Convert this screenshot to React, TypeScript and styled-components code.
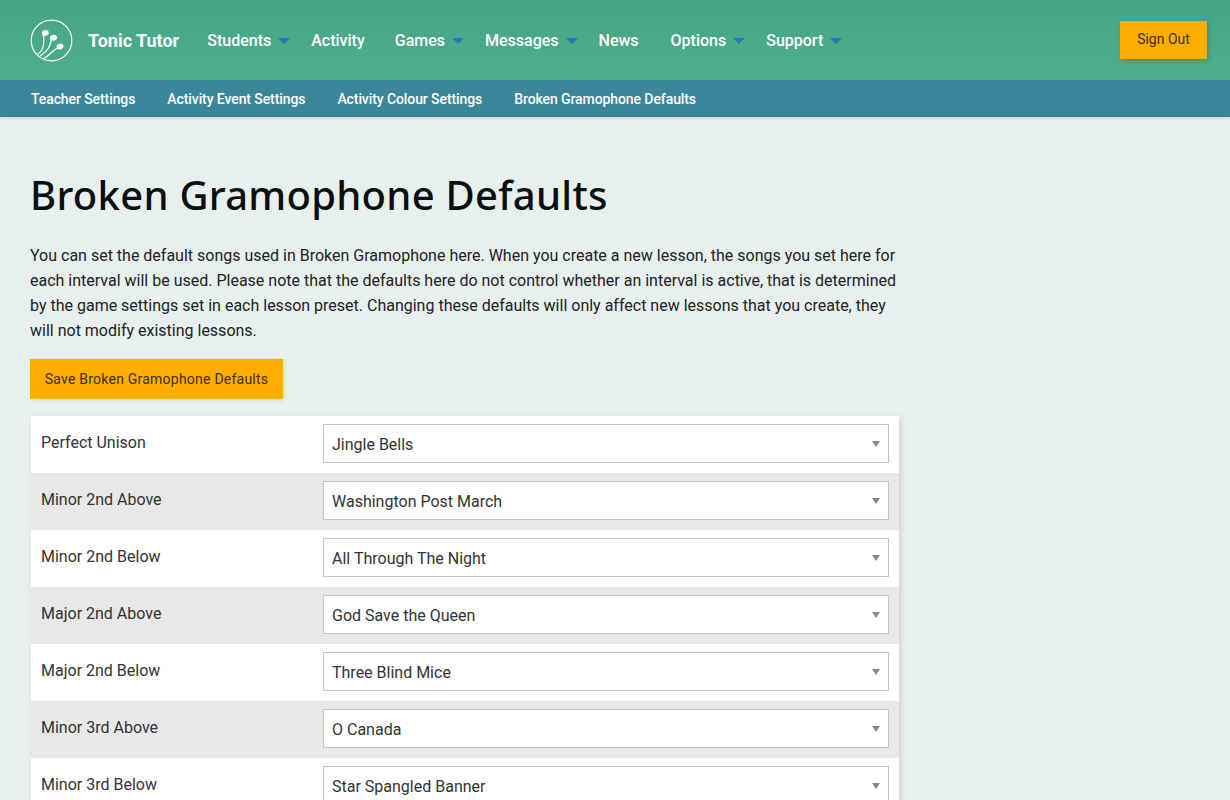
import React from 'react';
import styled, { createGlobalStyle } from 'styled-components';

const Global = createGlobalStyle`
  html, body { margin: 0; padding: 0; height: 800px; overflow: hidden; }
  body { background: #e8f0ef; font-family: Roboto, "Liberation Sans", sans-serif; color: #222; }
  * { box-sizing: border-box; }
`;
const TopBar = styled.header`
  height: 80px; display: flex; align-items: center; padding: 0 23px 0 30px;
  background: linear-gradient(180deg, #44a584 0%, #4fad8d 100%);
`;
const Brand = styled.a`
  display: flex; align-items: center; gap: 15px; color: #fff; font-weight: 700; font-size: 18px; margin-right: 28px;
`;
const Nav = styled.nav`display: flex; align-items: center; flex: 1;`;
const NavItem = styled.a<{ $after: number }>`
  display: flex; align-items: center; color: #fff; font-size: 16px; font-weight: 500; height: 80px;
  margin-right: ${p => p.$after}px;
`;
const Caret = styled.span`
  width: 0; height: 0; margin-left: 7px; margin-top: 2px;
  border-left: 6px solid transparent; border-right: 6px solid transparent; border-top: 6px solid #2478c4;
`;
const SignOut = styled.button`
  width: 87px; height: 38px; border: 0; background: #ffae00; color: #3a3000;
  font: 400 14px Roboto, sans-serif; box-shadow: 2px 2px 5px rgba(0,0,0,.15); padding: 0 0 2px;
`;
const SubBar = styled.div`
  height: 37px; background: #3c8699; display: flex; align-items: center; gap: 32px; padding-left: 31px;
  box-shadow: 0 1px 3px rgba(0,0,0,.15);
`;
const SubLink = styled.a`color: #fff; font-size: 14px; font-weight: 500; letter-spacing: -0.09px;`;
const Main = styled.main`width: 870px; margin-left: 30px; padding-top: 51px;`;
const Title = styled.h1`
  margin: 0 0 21px; font: 500 40px/54px "Noto Sans", "Open Sans", sans-serif; color: #0b0f10; letter-spacing: 0.27px;
`;
const Intro = styled.p`
  margin: 0 0 16px; font-size: 16px; line-height: 25px; color: #222;
`;
const SaveButton = styled.button`
  height: 40px; width: 253px; padding: 0; border: 0; background: #ffae00; color: #3a3000; display: block;
  font: 400 14px Roboto, sans-serif; letter-spacing: 0.23px; box-shadow: 1px 1px 4px rgba(0,0,0,.1);
`;
const Table = styled.div`
  margin: 17px 0 0 1px; width: 868px; box-shadow: 2px 2px 6px rgba(0,0,0,.12);
`;
const Row = styled.div<{ $alt: boolean }>`
  height: 57px; display: flex; background: ${p => (p.$alt ? '#e8e8e8' : '#fff')};
  padding: 8px 10px 0;
`;
const Label = styled.div`
  width: 282px; font-size: 16px; line-height: 20px; padding-top: 9px; color: #333;
`;
const SelectBox = styled.div`position: relative; width: 566px; height: 39px;`;
const Select = styled.select`
  appearance: none; width: 100%; height: 100%; background: #fff; border: 1px solid #c4c4c4; border-radius: 0;
  padding: 2px 8px 0; font: 400 16px Roboto, sans-serif; color: #333; outline: none;
`;
const SelectCaret = styled.span`
  position: absolute; right: 9px; top: 17px; width: 0; height: 0;
  border-left: 4px solid transparent; border-right: 4px solid transparent; border-top: 6px solid #888;
`;

const Logo = () => (
  <svg width="43" height="43" viewBox="0 0 43 43" fill="none" stroke="#fff" strokeWidth="1.2">
    <circle cx="21.5" cy="21.500" r="20.300" />
    <path d="M14 15c-1 3 .5 7-.5 11-.5 3-2.500 7-5.500 9" />
    <path d="M21.500 20c-1 3-1 6-3 9-2 3.500-5.500 6-8.500 8" />
    <path d="M28 29c-2 .5-4 2-6.500 4.500-2 2-5 4.500-7.500 6" />
    <ellipse cx="15.300" cy="14" rx="3.500" ry="2.800" fill="#fff" stroke="none" transform="rotate(-15 15.300 14)" />
    <ellipse cx="23.500" cy="18.800" rx="3.500" ry="2.800" fill="#fff" stroke="none" transform="rotate(-15 23.500 18.800)" />
    <ellipse cx="30" cy="27.500" rx="3.500" ry="2.800" fill="#fff" stroke="none" transform="rotate(-20 30 27.500)" />
  </svg>
);

const nav: [string, boolean, number][] = [['Students', true, 21], ['Activity', false, 30], ['Games', true, 21], ['Messages', true, 21], ['News', false, 32], ['Options', true, 21], ['Support', true, 21]];
const subs = ['Teacher Settings', 'Activity Event Settings', 'Activity Colour Settings', 'Broken Gramophone Defaults'];
const rows = [
  ['Perfect Unison', 'Jingle Bells'],
  ['Minor 2nd Above', 'Washington Post March'],
  ['Minor 2nd Below', 'All Through The Night'],
  ['Major 2nd Above', 'God Save the Queen'],
  ['Major 2nd Below', 'Three Blind Mice'],
  ['Minor 3rd Above', 'O Canada'],
  ['Minor 3rd Below', 'Star Spangled Banner'],
];

export default function App() {
  return (
    <>
      <Global />
      <TopBar>
        <Brand><Logo />Tonic Tutor</Brand>
        <Nav>
          {nav.map(([n, d, a]) => (
            <NavItem key={n} $after={a}>{n}{d && <Caret />}</NavItem>
          ))}
        </Nav>
        <SignOut>Sign Out</SignOut>
      </TopBar>
      <SubBar>{subs.map(s => <SubLink key={s}>{s}</SubLink>)}</SubBar>
      <Main>
        <Title>Broken Gramophone Defaults</Title>
        <Intro>You can set the default songs used in Broken Gramophone here. When you create a new lesson, the songs you set here for each interval will be used. Please note that the defaults here do not control whether an interval is active, that is determined by the game settings set in each lesson preset. Changing these defaults will only affect new lessons that you create, they will not modify existing lessons.</Intro>
        <SaveButton>Save Broken Gramophone Defaults</SaveButton>
        <Table>
          {rows.map(([l, v], i) => (
            <Row key={l} $alt={i % 2 === 1}>
              <Label>{l}</Label>
              <SelectBox>
                <Select defaultValue={v}><option>{v}</option></Select>
                <SelectCaret />
              </SelectBox>
            </Row>
          ))}
        </Table>
      </Main>
    </>
  );
}
